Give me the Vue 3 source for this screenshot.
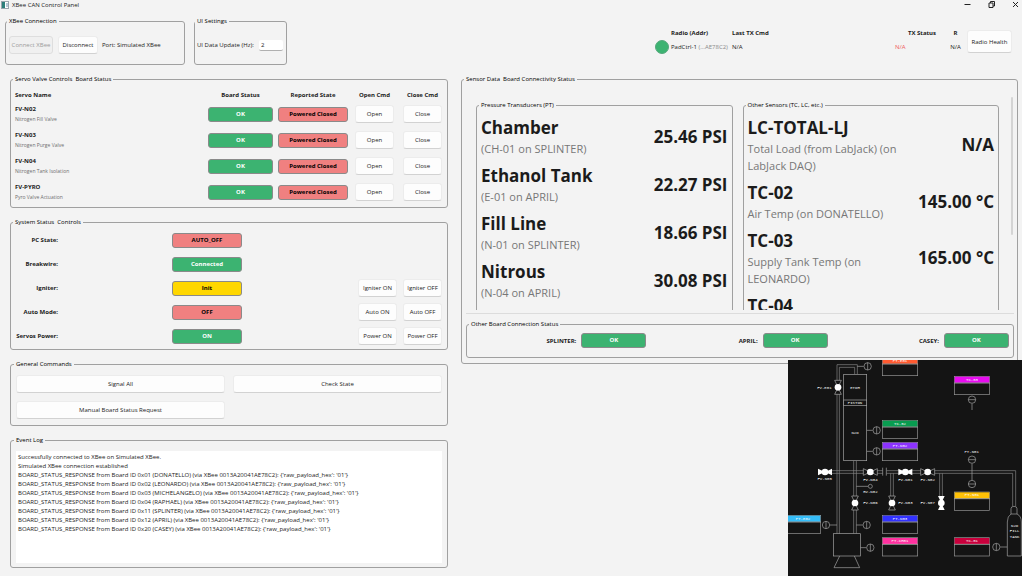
<script setup>
import { ref } from 'vue'

const rate = ref('2')

const servos = [
  { name: 'FV-N02', desc: 'Nitrogen Fill Valve' },
  { name: 'FV-N03', desc: 'Nitrogen Purge Valve' },
  { name: 'FV-N04', desc: 'Nitrogen Tank Isolation' },
  { name: 'FV-PYRO', desc: 'Pyro Valve Actuation' },
]

const system = [
  { label: 'PC State:', value: 'AUTO_OFF', tone: 'red' },
  { label: 'Breakwire:', value: 'Connected', tone: 'green' },
  { label: 'Igniter:', value: 'Init', tone: 'yellow', cmd: 'Igniter' },
  { label: 'Auto Mode:', value: 'OFF', tone: 'red', cmd: 'Auto' },
  { label: 'Servos Power:', value: 'ON', tone: 'green', cmd: 'Power' },
]

const transducers = [
  { name: 'Chamber', source: '(CH-01 on SPLINTER)', value: '25.46 PSI' },
  { name: 'Ethanol Tank', source: '(E-01 on APRIL)', value: '22.27 PSI' },
  { name: 'Fill Line', source: '(N-01 on SPLINTER)', value: '18.66 PSI' },
  { name: 'Nitrous', source: '(N-04 on APRIL)', value: '30.08 PSI' },
]

const others = [
  { name: 'LC-TOTAL-LJ', source: 'Total Load (from LabJack) (on LabJack DAQ)', value: 'N/A' },
  { name: 'TC-02', source: 'Air Temp (on DONATELLO)', value: '145.00 °C' },
  { name: 'TC-03', source: 'Supply Tank Temp (on LEONARDO)', value: '165.00 °C' },
  { name: 'TC-04', source: '', value: '' },
]

const boards = ['SPLINTER:', 'APRIL:', 'CASEY:']

const responders = [
  ['0x01', 'DONATELLO'],
  ['0x02', 'LEONARDO'],
  ['0x03', 'MICHELANGELO'],
  ['0x04', 'RAPHAEL'],
  ['0x11', 'SPLINTER'],
  ['0x12', 'APRIL'],
  ['0x20', 'CASEY'],
]
const log = [
  'Successfully connected to XBee on Simulated XBee.',
  'Simulated XBee connection established',
  ...responders.map(
    ([id, name]) =>
      `BOARD_STATUS_RESPONSE from Board ID ${id} (${name}) (via XBee 0013A20041AE78C2): {'raw_payload_hex': '01'}`
  ),
].join('\n')

const tags = [
  { x: 289, y: 4, text: 'PT-E01', color: '#ff5a30' },
  { x: 505, y: 61, text: 'TC-03', color: '#e80cf0' },
  { x: 289, y: 193, text: 'TC-02', color: '#089c50' },
  { x: 289, y: 259, text: 'PT-N02', color: '#8c32ff' },
  { x: 505, y: 408, text: 'PT-N01', color: '#ffc107' },
  { x: -2, y: 478, text: 'PT-E02', color: '#35bdf8' },
  { x: 289, y: 478, text: 'PT-N03', color: '#3232ff' },
  { x: 289, y: 545, text: 'PT-CH01', color: '#ff32a0' },
  { x: 505, y: 545, text: 'TC-01', color: '#c8003c' },
]

const gauges = [
  { x: 245, y: 31 },
  { x: 272, y: 223 },
  { x: 272, y: 286 },
  { x: 120, y: 507 },
  { x: 242, y: 507 },
  { x: 253, y: 575 },
  { x: 631, y: 573 },
  { x: 558, y: 131, flat: true },
  { x: 558, y: 311, flat: true },
  { x: 558, y: 384, flat: true },
]

const valves = [
  { x: 156, y: 94, turn: 90 },
  { x: 117, y: 348, turn: 0, solid: true },
  { x: 253, y: 348, turn: 0 },
  { x: 358, y: 348, turn: 0, solid: true },
  { x: 425, y: 348, turn: 0 },
  { x: 207, y: 441, turn: 90 },
  { x: 318, y: 441, turn: 90 },
  { x: 466, y: 441, turn: 90, solid: true },
]

const notes = [
  { x: 115, y: 98, text: 'FV-E01' },
  { x: 207, y: 98, text: 'ETOH' },
  { x: 207, y: 145, text: 'PISTON' },
  { x: 207, y: 234, text: 'N2O' },
  { x: 116, y: 372, text: 'FV-N05' },
  { x: 253, y: 374, text: 'FV-N04' },
  { x: 358, y: 374, text: 'FV-N01' },
  { x: 425, y: 374, text: 'FV-N02' },
  { x: 253, y: 411, text: 'RV-N02' },
  { x: 253, y: 445, text: 'FV-N06' },
  { x: 358, y: 445, text: 'FV-N03' },
  { x: 425, y: 445, text: 'FV-N07' },
  { x: 557, y: 290, text: 'PT-N01' },
  { x: 686, y: 513, text: 'N2O' },
  { x: 686, y: 529, text: 'FILL' },
  { x: 686, y: 545, text: 'TANK' },
]
</script>

<template>
  <div class="window">
    <header class="titlebar">
      <svg class="app-icon" viewBox="0 0 8 8" aria-hidden="true">
        <rect x="0.5" y="0.5" width="7" height="7" fill="#fff" stroke="#9aa5ad" />
        <rect x="1" y="1" width="3" height="6" fill="#2d7f7a" />
        <rect x="5" y="2" width="2" height="4" fill="#b9c8d6" />
      </svg>
      <h1>XBee CAN Control Panel</h1>
      <button class="win" aria-label="Minimize">
        <svg viewBox="0 0 7 7"><path d="M0.5 3.5H6.5" /></svg>
      </button>
      <button class="win" aria-label="Restore">
        <svg viewBox="0 0 7 7"><path d="M1 2H5V6.500H1ZM2.500 2V0.500H6.500V5H5" /></svg>
      </button>
      <button class="win" aria-label="Close">
        <svg viewBox="0 0 7 7"><path d="M1 1L6 6M6 1L1 6" /></svg>
      </button>
    </header>

    <div class="toolbar">
      <fieldset class="connection">
        <legend>XBee Connection</legend>
        <button class="btn" disabled>Connect XBee</button>
        <button class="btn">Disconnect</button>
        <span>Port: Simulated XBee</span>
      </fieldset>
      <fieldset class="settings">
        <legend>UI Settings</legend>
        <label for="rate">UI Data Update (Hz):</label>
        <input id="rate" v-model="rate" type="text" />
      </fieldset>
      <table class="radio">
        <colgroup><col class="c-dot" /><col class="c-addr" /><col /><col class="c-tx" /><col class="c-r" /></colgroup>
        <thead>
          <tr><th></th><th>Radio (Addr)</th><th>Last TX Cmd</th><th class="mid">TX Status</th><th class="mid">R</th></tr>
        </thead>
        <tbody>
          <tr>
            <td><span class="dot"></span></td>
            <td>PadCtrl-1 <span class="addr">(...AE78C2)</span></td>
            <td>N/A</td>
            <td class="bad">N/A</td>
            <td class="mid">N/A</td>
          </tr>
        </tbody>
      </table>
      <button class="btn health">Radio Health</button>
    </div>

    <main>
      <div class="left">
        <fieldset class="servo">
          <legend>Servo Valve Controls&nbsp; Board Status</legend>
          <table>
            <colgroup><col /><col class="c-board" /><col class="c-state" /><col class="c-open" /><col class="c-close" /></colgroup>
            <thead>
              <tr><th class="name">Servo Name</th><th>Board Status</th><th>Reported State</th><th>Open Cmd</th><th>Close Cmd</th></tr>
            </thead>
            <tbody>
              <tr v-for="s in servos" :key="s.name">
                <td class="name"><b>{{ s.name }}</b><small>{{ s.desc }}</small></td>
                <td><div class="badge green">OK</div></td>
                <td><div class="badge red">Powered Closed</div></td>
                <td><button class="btn">Open</button></td>
                <td><button class="btn">Close</button></td>
              </tr>
            </tbody>
          </table>
        </fieldset>

        <fieldset class="system">
          <legend>System Status&nbsp; Controls</legend>
          <div v-for="s in system" :key="s.label" class="row">
            <b>{{ s.label }}</b>
            <div class="badge" :class="s.tone">{{ s.value }}</div>
            <template v-if="s.cmd">
              <button class="btn on">{{ s.cmd }} ON</button>
              <button class="btn">{{ s.cmd }} OFF</button>
            </template>
          </div>
        </fieldset>

        <fieldset class="general">
          <legend>General Commands</legend>
          <button class="btn">Signal All</button>
          <button class="btn">Check State</button>
          <button class="btn">Manual Board Status Request</button>
        </fieldset>

        <fieldset class="log">
          <legend><label for="log">Event Log</label></legend>
          <textarea id="log" readonly :value="log"></textarea>
        </fieldset>
      </div>

      <fieldset class="sensors">
        <legend>Sensor Data&nbsp; Board Connectivity Status</legend>
        <div class="viewport">
          <fieldset class="readings">
            <legend>Pressure Transducers (PT)</legend>
            <template v-for="r in transducers" :key="r.name">
              <div><h2>{{ r.name }}</h2><p>{{ r.source }}</p></div>
              <strong>{{ r.value }}</strong>
            </template>
          </fieldset>
          <fieldset class="readings">
            <legend>Other Sensors (TC, LC, etc.)</legend>
            <template v-for="r in others" :key="r.name">
              <div><h2>{{ r.name }}</h2><p>{{ r.source }}</p></div>
              <strong>{{ r.value }}</strong>
            </template>
          </fieldset>
          <div class="scroll"></div>
        </div>
        <hr />
        <fieldset class="boards">
          <legend>Other Board Connection Status</legend>
          <div v-for="b in boards" :key="b" class="board">
            <b>{{ b }}</b>
            <div class="badge green">OK</div>
          </div>
        </fieldset>
      </fieldset>
    </main>

    <svg class="diagram" viewBox="6 12 702 648" role="img" aria-label="Plumbing diagram">
      <rect x="6" y="12" width="702" height="648" fill="#141414" />
      <g class="pipe">
        <path d="M153 533V26H214V55M160 533V34H206V55" />
        <path d="M138 344H290M138 352H290M302 344H689V451M302 352H680V451" />
        <path d="M203 314V533M211 314V533" />
        <path d="M314 352V424M322 352V424M461 352V424M469 352V424" />
      </g>
      <g class="line">
        <path d="M290 335V359M301 335V359" />
        <path d="M214 31H233M242 223H260M242 286H260M132 507H153M211 507H230M223 575H241M643 573H664" />
        <path d="M558 143V162M558 323V372M211 391H246" />
        <rect x="173" y="55" width="69" height="259" class="shell" />
        <rect x="173" y="132" width="69" height="17" class="shell" />
        <rect x="142" y="533" width="81" height="67" class="shell" />
        <path d="M161 600L144 635H221L205 600" />
        <circle cx="253" cy="391" r="6" class="shell" />
        <path d="M675 474V458Q675 451 684 451Q693 451 693 458V474Q706 480 706 498V600H664V498Q664 480 675 474Z" class="shell" />
        <path d="M675 474H693" />
      </g>
      <g v-for="(v, i) in valves" :key="'v' + i" :transform="`translate(${v.x} ${v.y}) rotate(${v.turn})`">
        <path d="M-21 -10L0 0L-21 10ZM21 -10L0 0L21 10Z" :class="v.solid ? 'full' : 'hollow'" />
        <circle r="10" class="full" />
      </g>
      <g v-for="(g, i) in gauges" :key="'g' + i" :transform="`translate(${g.x} ${g.y})`" class="line">
        <circle r="11" class="shell" />
        <path :d="g.flat ? 'M-11 0H11' : 'M0 -11V11'" />
      </g>
      <g v-for="(t, i) in tags" :key="'t' + i" :transform="`translate(${t.x} ${t.y})`">
        <rect width="106" height="55" class="box" />
        <rect x="1" y="1" width="104" height="18" :fill="t.color" />
        <path d="M0 20H106" class="rule" />
        <text x="53" y="13">{{ t.text }}</text>
      </g>
      <text v-for="n in notes" :key="n.text + n.y" :x="n.x" :y="n.y">{{ n.text }}</text>
    </svg>
  </div>
</template>

<style>
body {
  margin: 0;
  background: #f3f3f3;
}
</style>

<style scoped>
.window {
  position: relative;
  box-sizing: border-box;
  min-height: 100vh;
  display: flex;
  flex-direction: column;
  background: #f3f3f3;
  color: #1b1b1b;
  font-family: "Open Sans", "Noto Sans", sans-serif;
  font-size: 6px;
  line-height: 10px;
  overflow: hidden;
}
.window * {
  box-sizing: border-box;
}
h1,
h2,
p {
  margin: 0;
}
button,
input,
textarea {
  font: inherit;
  color: inherit;
  margin: 0;
}
fieldset {
  min-width: 0;
  margin: 0;
  padding: 0;
  border: 1px solid #a0a0a0;
  border-radius: 3px;
}
legend {
  margin-left: -2px;
  padding: 0 2px;
  height: 10px;
  color: #000;
}
table {
  table-layout: fixed;
  border-collapse: collapse;
}
th,
td {
  padding: 0;
  text-align: left;
  white-space: nowrap;
}
th.mid,
td.mid {
  text-align: center;
}
.btn {
  height: 18px;
  padding: 0;
  border: 1px solid #ececec;
  border-bottom-color: #d2d2d2;
  border-radius: 3px;
  background: #fdfdfd;
  white-space: nowrap;
}
.btn:disabled {
  background: #f0f0f0;
  border-color: #dedede;
  color: #9c9c9c;
}
.badge {
  height: 15px;
  border: 1px solid #8a8a8a;
  border-radius: 3px;
  font-weight: 700;
  line-height: 13px;
  text-align: center;
  white-space: nowrap;
}
.green {
  background: #3cb371;
  color: #fff;
}
.red {
  background: #f08080;
  color: #000;
}
.yellow {
  background: #ffd700;
  color: #000;
}

.titlebar {
  display: flex;
  align-items: center;
  height: 9px;
  padding: 0 3px 0 1px;
}
.app-icon {
  width: 8px;
  height: 8px;
}
h1 {
  flex: 1;
  margin-left: 3px;
  font-size: 6px;
  font-weight: 400;
}
.win {
  width: 7px;
  height: 7px;
  margin-left: 17px;
  padding: 0;
  border: 0;
  background: none;
  line-height: 0;
}
.win svg {
  width: 7px;
  height: 7px;
  fill: none;
  stroke: #222;
  stroke-width: 1;
}

.toolbar {
  display: flex;
  align-items: flex-start;
  padding: 7px 10px 9px 5px;
}
.connection,
.settings {
  display: flex;
  align-items: center;
  height: 49px;
}
.connection {
  flex: none;
  width: 180px;
  padding-left: 3px;
}
.connection .btn {
  width: 44px;
  margin-right: 5px;
}
.connection .btn + .btn {
  width: 40px;
  margin-right: 4px;
}
.settings {
  flex: none;
  width: 93px;
  margin-left: 9px;
  padding: 0 3px 0 2px;
  justify-content: space-between;
}
.settings input {
  width: 24px;
  height: 11px;
  padding: 0 2px;
  border: 0;
  border-bottom: 1px solid #b0b0b0;
  border-radius: 2px;
  background: #fff;
}
.radio {
  width: 307px;
  margin: 10px 5px 0 auto;
}
.radio tr {
  height: 14px;
}
.c-dot {
  width: 16px;
}
.c-addr {
  width: 61px;
}
.c-tx {
  width: 54px;
}
.c-r {
  width: 13px;
}
.dot {
  display: block;
  width: 14px;
  height: 14px;
  border: 1px solid #55a87c;
  border-radius: 50%;
  background: #3cb371;
}
.addr {
  color: #8a8a8a;
}
.bad {
  color: #f0605c;
}
.health {
  width: 45px;
  height: 23px;
  margin-top: 14px;
}

main {
  flex: 1;
  display: grid;
  grid-template-columns: 438fr 557fr;
  gap: 13px;
  align-items: start;
  padding: 0 4px 8px 10px;
}
.left {
  display: flex;
  flex-direction: column;
  gap: 9px;
  height: 100%;
}
.servo {
  padding: 4px 5px 2px 4px;
}
.servo table {
  width: 100%;
}
.c-board {
  width: 70px;
}
.c-state {
  width: 77px;
}
.c-open {
  width: 48px;
}
.c-close {
  width: 39px;
}
.servo thead tr {
  height: 13px;
}
.servo tbody tr {
  height: 26px;
}
.servo th {
  text-align: center;
}
.servo th.name {
  text-align: left;
}
.servo tr > :nth-child(2) {
  padding-right: 5px;
}
.servo tr > :nth-child(3) {
  padding-right: 7px;
}
.servo tr > :nth-child(4) {
  padding-right: 9px;
}
.servo td .btn {
  display: block;
  width: 100%;
}
.name b,
.name small {
  display: block;
}
.name small {
  font-size: 5px;
  color: #6e6e6e;
}
.system {
  padding: 1px 5px 1px 4px;
}
.row {
  display: flex;
  align-items: center;
  height: 24px;
}
.row b {
  width: 43px;
  margin-right: 114px;
  text-align: right;
  white-space: nowrap;
}
.row .badge {
  width: 70px;
}
.row .btn {
  width: 39px;
}
.row .on {
  margin-left: auto;
  margin-right: 6px;
}
.general {
  display: grid;
  grid-template-columns: 1fr 1fr;
  gap: 8px;
  padding: 6px 5px;
}
.log {
  flex: 1;
  display: flex;
  padding: 6px 5px 4px;
}
.log textarea {
  flex: 1;
  min-height: 112px;
  padding: 2px;
  border: 0;
  background: #fff;
  line-height: 9px;
  resize: none;
  outline: 0;
  white-space: pre;
  overflow: hidden;
}

.sensors {
  padding: 0 3px 5px 4px;
}
.viewport {
  display: grid;
  grid-template-columns: 1fr 1fr 5px;
  column-gap: 10px;
  height: 226px;
  padding: 16px 0 0 10px;
  overflow: hidden;
}
.readings {
  display: grid;
  grid-template-columns: 1fr auto;
  align-items: center;
  align-content: start;
  row-gap: 7px;
  height: 260px;
  padding: 6px 4px;
}
.readings h2 {
  font-size: 17px;
  font-weight: 700;
  line-height: 24px;
}
.readings p {
  font-size: 11px;
  line-height: 17px;
  color: #777;
}
.readings strong {
  justify-self: end;
  font-size: 17px;
  line-height: 24px;
  white-space: nowrap;
}
.scroll {
  width: 2px;
  height: 138px;
  margin-top: -3px;
  justify-self: center;
  border-radius: 1px;
  background: #d4d4d4;
}
hr {
  height: 1px;
  margin: 3px 0 5px;
  border: 0;
  background: #dcdcdc;
}
.boards {
  display: flex;
  gap: 6px;
  padding: 4px 4px 9px;
}
.board {
  display: flex;
  flex: 1;
  justify-content: flex-end;
  align-items: center;
  gap: 5px;
}
.board .badge {
  width: 65px;
}

.diagram {
  position: absolute;
  right: 0;
  bottom: 0;
  width: 234px;
  height: 216px;
}
.pipe path {
  fill: none;
  stroke: #8a8a8a;
  stroke-width: 2;
}
.line path,
.shell {
  stroke: #a8a8a8;
  stroke-width: 2;
}
.line path {
  fill: none;
}
.line .shell {
  fill: #141414;
}
.full {
  fill: #fff;
}
.hollow {
  fill: #141414;
  stroke: #b0b0b0;
  stroke-width: 2;
}
.box {
  fill: #141414;
  stroke: #9a9a9a;
  stroke-width: 2;
}
.rule {
  stroke: #d8d8d8;
  stroke-width: 2;
}
.diagram text {
  font-family: "Liberation Mono", monospace;
  font-size: 12px;
  fill: #fff;
  text-anchor: middle;
}
</style>
